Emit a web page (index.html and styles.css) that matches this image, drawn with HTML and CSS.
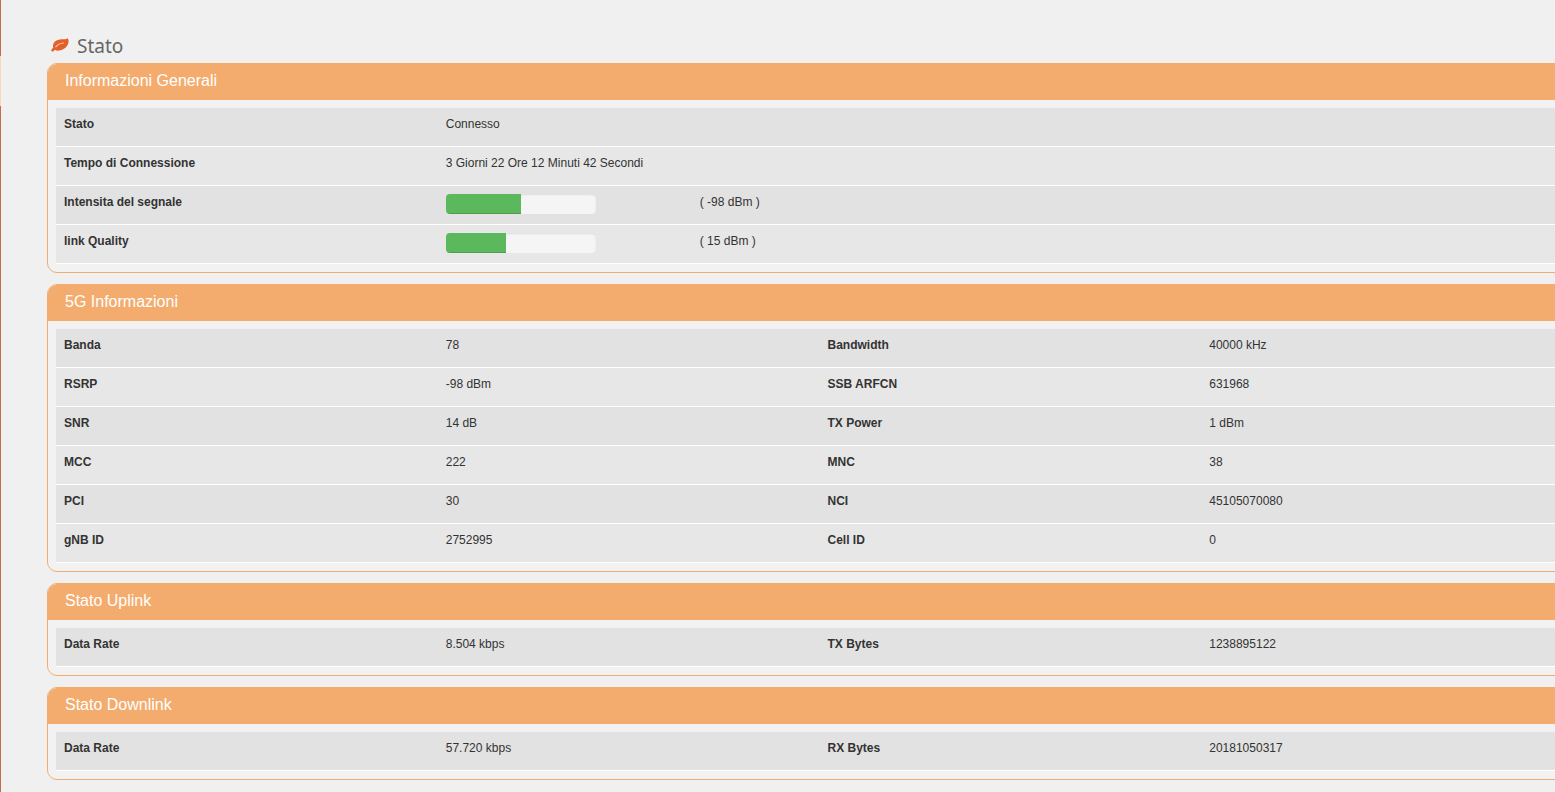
FILE: index.html
```
<!DOCTYPE html>
<html lang="it">
<head>
    <meta charset="UTF-8">
    <meta name="viewport" content="width=device-width, initial-scale=1.0">
    <title>Stato</title>
    <link rel="stylesheet" href="styles.css">
</head>
<body>
    <!-- edge of the side menu -->
    <div class="menu-edge">
        <div class="menu-active"></div>
    </div>

    <main class="content">
        <h1 class="page-title">
            <svg class="leaf" viewBox="0 0 18 16" aria-hidden="true">
                <path fill="#e35f2c" d="M16.4 0.3C15 1.7 13.2 1.2 10.6 1.3C5.4 1.5 2 4.4 2 8.2C2 8.9 2.1 9.3 2.3 9.8C1.3 10.6 0.3 11.4 0.3 12.3C0.3 13 0.9 13.6 1.5 13.6C2.5 13.6 3 12.6 3.9 11.8C5 12.5 6.4 12.8 7.8 12.6C13.4 12.1 17.6 8 17.6 3.1C17.6 1.9 17.2 0.9 16.4 0.3Z"/>
                <path fill="none" stroke="#f8cdb6" stroke-width="1.1" stroke-linecap="round" d="M4.8 8.8C6.8 6.4 8.8 5.3 12.4 5"/>
            </svg>
            Stato
        </h1>

        <section class="panel">
            <h2>Informazioni Generali</h2>
            <div class="panel-body">
                <table class="general">
                    <tr>
                        <th scope="row">Stato</th>
                        <td>Connesso</td>
                    </tr>
                    <tr>
                        <th scope="row">Tempo di Connessione</th>
                        <td>3 Giorni 22 Ore 12 Minuti 42 Secondi</td>
                    </tr>
                    <tr>
                        <th scope="row" id="signal">Intensita del segnale</th>
                        <td>
                            <div class="level">
                                <div class="progress" role="progressbar" aria-labelledby="signal" aria-valuenow="50">
                                    <div class="progress-bar" style="width: 50%"></div>
                                </div>
                                <span>( -98 dBm )</span>
                            </div>
                        </td>
                    </tr>
                    <tr>
                        <th scope="row" id="quality">link Quality</th>
                        <td>
                            <div class="level">
                                <div class="progress" role="progressbar" aria-labelledby="quality" aria-valuenow="40">
                                    <div class="progress-bar" style="width: 40%"></div>
                                </div>
                                <span>( 15 dBm )</span>
                            </div>
                        </td>
                    </tr>
                </table>
            </div>
        </section>

        <section class="panel">
            <h2>5G Informazioni</h2>
            <div class="panel-body">
                <table>
                    <tr>
                        <th scope="row">Banda</th>
                        <td>78</td>
                        <th scope="row">Bandwidth</th>
                        <td>40000 kHz</td>
                    </tr>
                    <tr>
                        <th scope="row">RSRP</th>
                        <td>-98 dBm</td>
                        <th scope="row">SSB ARFCN</th>
                        <td>631968</td>
                    </tr>
                    <tr>
                        <th scope="row">SNR</th>
                        <td>14 dB</td>
                        <th scope="row">TX Power</th>
                        <td>1 dBm</td>
                    </tr>
                    <tr>
                        <th scope="row">MCC</th>
                        <td>222</td>
                        <th scope="row">MNC</th>
                        <td>38</td>
                    </tr>
                    <tr>
                        <th scope="row">PCI</th>
                        <td>30</td>
                        <th scope="row">NCI</th>
                        <td>45105070080</td>
                    </tr>
                    <tr>
                        <th scope="row">gNB ID</th>
                        <td>2752995</td>
                        <th scope="row">Cell ID</th>
                        <td>0</td>
                    </tr>
                </table>
            </div>
        </section>

        <section class="panel">
            <h2>Stato Uplink</h2>
            <div class="panel-body">
                <table>
                    <tr>
                        <th scope="row">Data Rate</th>
                        <td>8.504 kbps</td>
                        <th scope="row">TX Bytes</th>
                        <td>1238895122</td>
                    </tr>
                </table>
            </div>
        </section>

        <section class="panel">
            <h2>Stato Downlink</h2>
            <div class="panel-body">
                <table>
                    <tr>
                        <th scope="row">Data Rate</th>
                        <td>57.720 kbps</td>
                        <th scope="row">RX Bytes</th>
                        <td>20181050317</td>
                    </tr>
                </table>
            </div>
        </section>
    </main>
</body>
</html>
```
FILE: styles.css
```
* {
    box-sizing: border-box;
}

body {
    margin: 0;
    min-height: 100vh;
    display: flex;
    overflow: hidden;
    background-color: #f0f0f0;
    color: #333;
    font-family: Arial, "Liberation Sans", sans-serif;
    font-size: 12px;
    line-height: 17px;
}

.menu-edge {
    width: 1px;
    padding-top: 56px;
    background-color: #c56c50;
}

.menu-active {
    height: 50px;
    background-color: #fad9b4;
}

/* the panels run past the right side of the window */
.content {
    flex: 1;
    padding: 32px 0 0 46px;
    margin-right: -37px;
}

.page-title {
    display: flex;
    align-items: center;
    gap: 8px;
    margin: 0 0 3px;
    padding-left: 4px;
    color: #666;
    font-family: Tahoma, "Noto Sans", sans-serif;
    font-size: 19px;
    font-weight: normal;
    line-height: 28px;
}

.leaf {
    width: 18px;
    height: 16px;
}

.panel {
    margin-bottom: 11px;
    border: 1px solid #f3ac6e;
    border-radius: 10px;
    overflow: hidden;
    background-color: #f2f2f2;
}

.panel h2 {
    margin: 0;
    padding: 7px 17px 9px;
    background-color: #f3ac6e;
    color: #fff;
    font-size: 16px;
    font-weight: normal;
    line-height: 20px;
}

.panel-body {
    padding: 8px;
}

table {
    width: 100%;
    table-layout: fixed;
    border-spacing: 0;
}

tr {
    background-color: #e7e7e7;
}

tr:nth-child(odd) {
    background-color: #e2e2e2;
}

th,
td {
    width: 25%;
    height: 39px;
    padding: 8px 8px 0;
    border-bottom: 1px solid #fff;
    text-align: left;
    vertical-align: top;
}

.general td {
    width: 75%;
}

.level {
    display: flex;
    gap: 104px;
}

.progress {
    width: 150px;
    height: 20px;
    overflow: hidden;
    border-radius: 4px;
    background-color: #f5f5f5;
    box-shadow: inset 0 1px 2px rgba(0, 0, 0, 0.1);
}

.progress-bar {
    height: 100%;
    background-color: #5cb85c;
    box-shadow: inset 0 -1px 0 rgba(0, 0, 0, 0.15);
}
```
